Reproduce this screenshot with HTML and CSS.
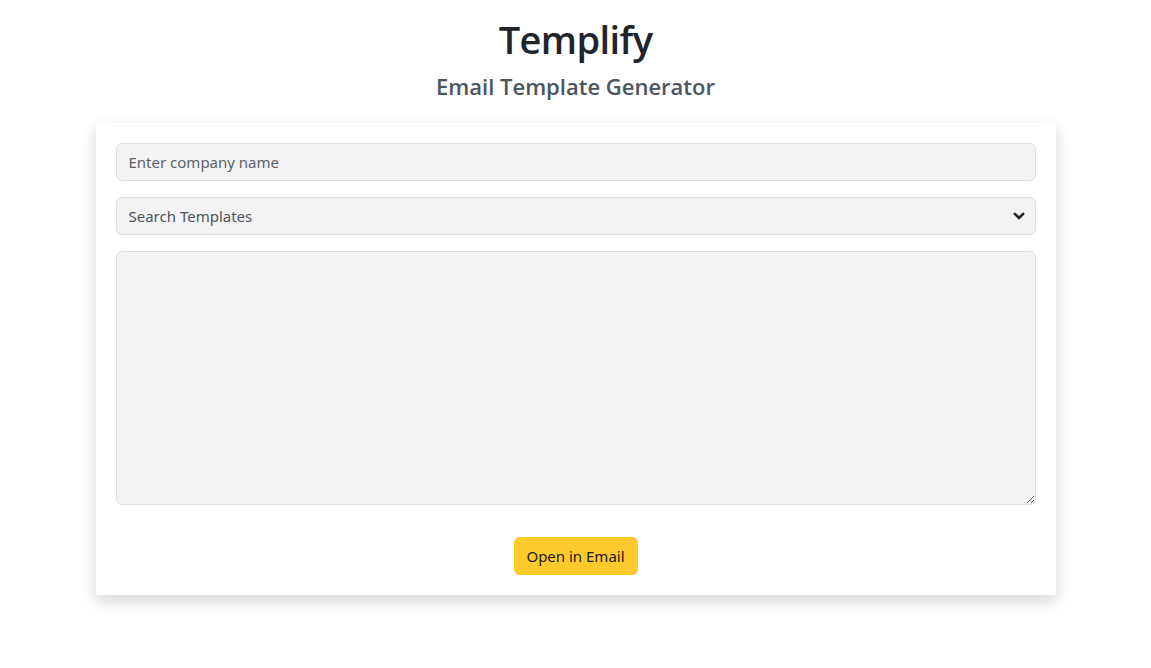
FILE: index.html
```html
<!DOCTYPE html>
<html lang="en">
<head>
<meta charset="utf-8">
<title>Templify</title>
<link rel="stylesheet" href="styles.css">
</head>
<body>
<main class="page">
  <header class="header">
    <h1 class="title">Templify</h1>
    <h2 class="subtitle">Email Template Generator</h2>
  </header>
  <section class="card">
    <input class="field" type="text" placeholder="Enter company name">
    <div class="select-wrap">
      <select class="field select">
        <option>Search Templates</option>
      </select>
      <svg class="chev" width="12" height="8" viewBox="0 0 12 8"><path d="M1.8 1.8 L6 6 L10.2 1.8" fill="none" stroke="#222" stroke-width="2.6" stroke-linecap="round" stroke-linejoin="round"/></svg>
    </div>
    <textarea class="field area"></textarea>
    <div class="actions">
      <button class="btn" type="button">Open in Email</button>
    </div>
  </section>
</main>
</body>
</html>
```

FILE: styles.css
```css
* { box-sizing: border-box; }
html, body { margin: 0; padding: 0; background: #fff; }
body {
  font-family: "Noto Sans", "Open Sans", "DejaVu Sans", sans-serif;
  color: #212529;
}
.page {
  display: flex;
  flex-direction: column;
  align-items: center;
  padding: 15px 0 72px;
}
.header { text-align: center; }
.title {
  margin: 0;
  font-family: "Open Sans", "Noto Sans", sans-serif;
  font-size: 38px;
  line-height: 48px;
  font-weight: 600;
  color: #212529;
  letter-spacing: -0.6px;
}
.subtitle {
  margin: 9px 0 0;
  font-family: "Open Sans", "Noto Sans", sans-serif;
  font-size: 22px;
  line-height: 28px;
  font-weight: 600;
  color: #4b5560;
  letter-spacing: 0;
}
.card {
  margin-top: 23px;
  width: 960px;
  background: #fff;
  padding: 20px;
  box-shadow: 0 6px 16px rgba(0,0,0,0.16);
  display: flex;
  flex-direction: column;
  gap: 16px;
}
.field {
  display: block;
  width: 100%;
  height: 38px;
  padding: 6px 12px;
  font-family: inherit;
  font-size: 15px;
  color: #495057;
  background: #f3f3f3;
  border: 1px solid #dcdde1;
  border-radius: 6px;
  outline: none;
}
.field::placeholder { color: #5b6168; }
.select-wrap { position: relative; }
.select {
  -webkit-appearance: none;
  appearance: none;
  color: #4d535a;
}
.chev {
  position: absolute;
  right: 11px;
  top: 15px;
  pointer-events: none;
}
.area {
  height: 254px;
  resize: vertical;
}
.actions {
  display: flex;
  justify-content: center;
  padding-top: 16px;
}
.btn {
  width: 124px;
  height: 38px;
  font-family: inherit;
  font-size: 15px;
  color: #1a1a1a;
  background: #ffca2c;
  border: 1px solid #ffc720;
  border-radius: 6px;
  padding: 0;
}
```
